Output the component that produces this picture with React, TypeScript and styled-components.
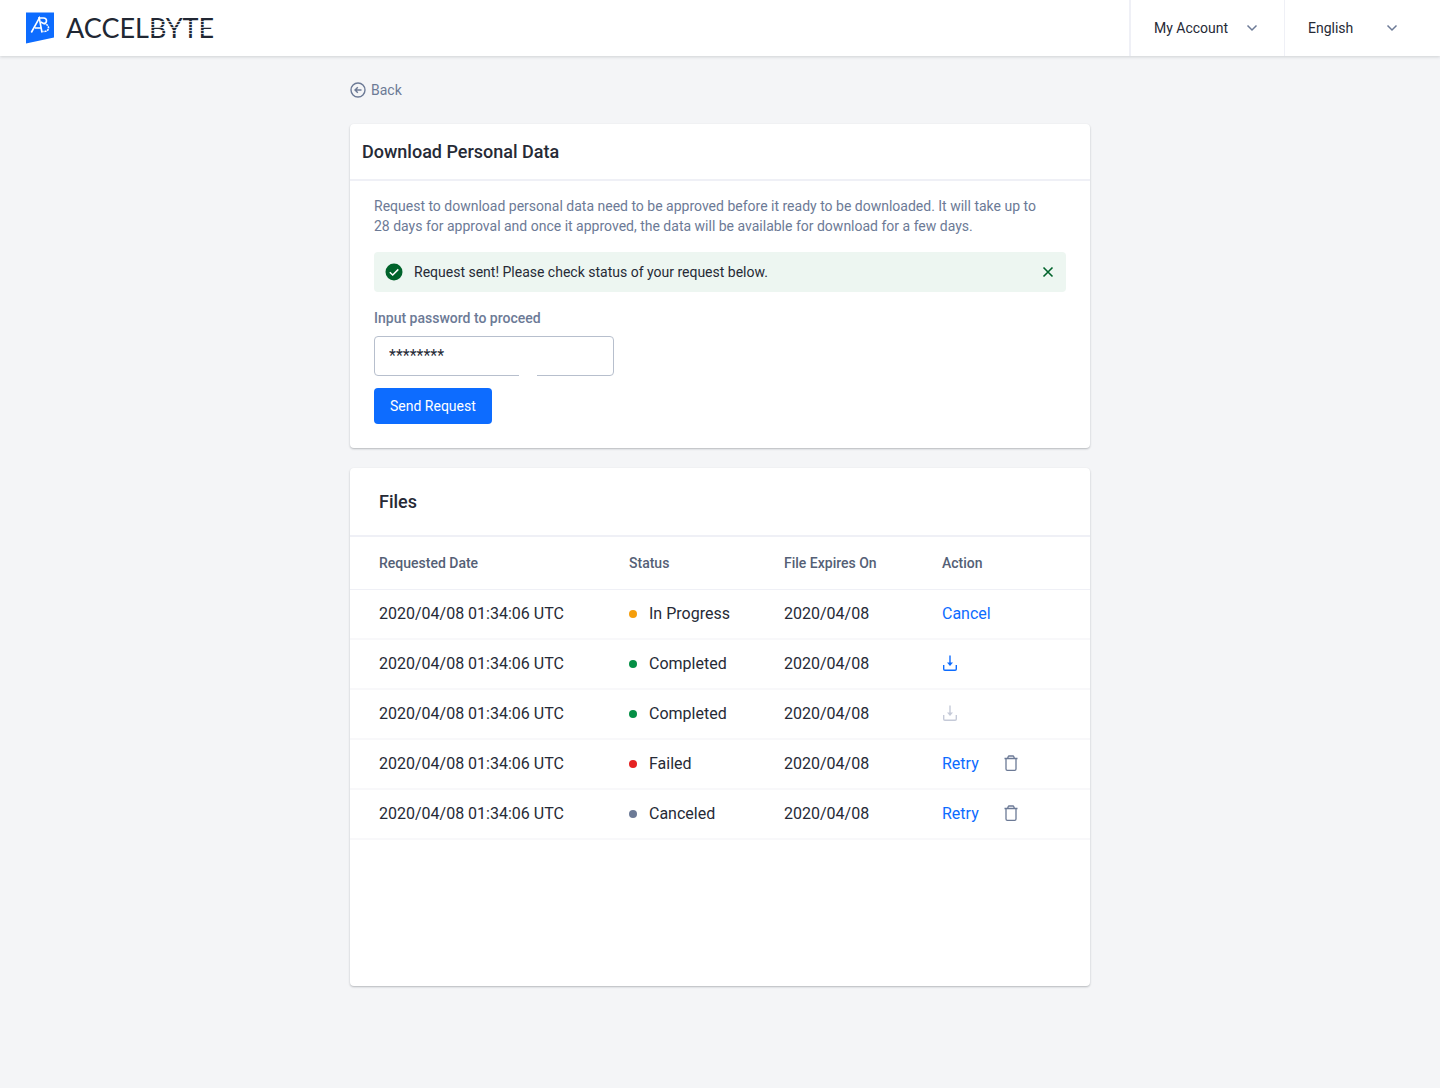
import React, { useState } from "react";
import styled, { createGlobalStyle, css } from "styled-components";

const color = {
  page: "#f4f5f7",
  ink: "#262a36",
  muted: "#6c7a96",
  heading: "#555f76",
  line: "#eff0f6",
  faint: "#f8f8fa",
  border: "#b7bfcd",
  blue: "#0d6cff",
  green: "#00632b",
  greenTint: "#edf6f1",
};

const GlobalStyle = createGlobalStyle`
  *, *::before, *::after { box-sizing: border-box; }
  body {
    margin: 0;
    min-height: 100vh;
    background: ${color.page};
    color: ${color.ink};
    font-family: Roboto, "Liberation Sans", sans-serif;
    font-size: 14px;
    line-height: 20px;
  }
  button, input { font: inherit; color: inherit; }
`;

const Header = styled.header`
  display: flex;
  justify-content: space-between;
  height: 56px;
  background: #fff;
  box-shadow: 0 1px 3px rgba(38, 42, 54, 0.18);
`;

const Brand = styled.a`
  display: flex;
  align-items: center;
  gap: 12px;
  padding-left: 26px;
  color: #212733;
  text-decoration: none;
`;

const Wordmark = styled.span`
  font-family: Lato, "Liberation Sans", sans-serif;
  font-size: 27px;
  line-height: 32px;
`;

const Striped = styled.span`
  position: relative;
  display: inline-block;

  &::after {
    content: "";
    position: absolute;
    inset: 9px 0;
    background: repeating-linear-gradient(rgba(255, 255, 255, 0.75) 0 1px, transparent 1px 3px);
  }
`;

const HeaderMenus = styled.nav`
  display: flex;
`;

const MenuButton = styled.button<{ $wide?: boolean }>`
  display: flex;
  align-items: center;
  justify-content: space-between;
  width: ${(p) => (p.$wide ? 156 : 155)}px;
  padding: 0 ${(p) => (p.$wide ? 42 : 26)}px 0 23px;
  border: 0;
  border-left: ${(p) => (p.$wide ? 1 : 2)}px solid ${color.line};
  background: none;
  cursor: pointer;
`;

const Main = styled.main`
  display: flex;
  flex-direction: column;
  width: 100%;
  max-width: 740px;
  margin: 0 auto;
  padding: 24px 0 80px;
`;

const BackLink = styled.a`
  display: inline-flex;
  align-items: center;
  align-self: flex-start;
  gap: 5px;
  margin-bottom: 24px;
  color: ${color.muted};
  text-decoration: none;
`;

const Card = styled.section<{ $tall?: boolean }>`
  margin-bottom: 20px;
  border-radius: 4px;
  background: #fff;
  box-shadow: 0 1px 2px rgba(38, 42, 54, 0.3);
  ${(p) => p.$tall && css`min-height: 518px;`}
`;

const CardTitle = styled.h2<{ $roomy?: boolean }>`
  margin: 0;
  padding: ${(p) => (p.$roomy ? "22px 29px 21px" : "16px 12px 15px")};
  border-bottom: 2px solid ${color.line};
  font-size: 18px;
  font-weight: 500;
  line-height: 24px;
`;

const CardBody = styled.div`
  padding: 15px 24px 24px;
`;

const Intro = styled.p`
  max-width: 680px;
  margin: 0 0 16px;
  color: ${color.muted};
`;

const Alert = styled.div`
  display: flex;
  align-items: center;
  gap: 10px;
  height: 40px;
  margin-bottom: 16px;
  padding: 0 10px;
  border-radius: 4px;
  background: ${color.greenTint};
`;

const AlertText = styled.span`
  flex: 1;
`;

const IconButton = styled.button<{ $tone?: string }>`
  display: inline-flex;
  padding: 0;
  border: 0;
  background: none;
  color: ${(p) => p.$tone ?? color.muted};
  cursor: pointer;

  &:disabled { cursor: default; }
`;

const Form = styled.form`
  display: flex;
  flex-direction: column;
  align-items: flex-start;
`;

const Label = styled.label`
  margin-bottom: 8px;
  color: ${color.muted};
  font-weight: 500;
`;

const PasswordField = styled.div`
  position: relative;
  display: flex;
  width: 240px;
  margin-bottom: 12px;

  &::after {
    content: "";
    position: absolute;
    right: 77px;
    bottom: 0;
    width: 18px;
    height: 1px;
    background: #fff;
  }
`;

const PasswordBox = styled.input`
  width: 100%;
  height: 40px;
  padding: 0 14px 2px;
  border: 1px solid ${color.border};
  border-radius: 4px;
  background: #fff;
  font-size: 16px;
`;

const PrimaryButton = styled.button`
  height: 36px;
  padding: 0 16px;
  border: 0;
  border-radius: 4px;
  background: ${color.blue};
  color: #fff;
  cursor: pointer;
`;

const Table = styled.table`
  width: 100%;
  border-collapse: collapse;
  table-layout: fixed;
`;

const Col = styled.col<{ $share?: number }>`
  width: ${(p) => (p.$share ? `${p.$share}px` : "auto")};
`;

const HeadCell = styled.th`
  height: 52px;
  padding: 0;
  border-bottom: 1px solid ${color.line};
  color: ${color.heading};
  font-weight: 500;
  text-align: left;

  &:first-child { padding-left: 29px; }
`;

const Cell = styled.td`
  height: 50px;
  padding: 0;
  border-bottom: 2px solid ${color.faint};
  font-size: 16px;

  &:first-child { padding-left: 29px; }
`;

const Status = styled.span<{ $dot: string }>`
  display: flex;
  align-items: center;
  gap: 12px;

  &::before {
    content: "";
    width: 8px;
    height: 8px;
    border-radius: 50%;
    background: ${(p) => p.$dot};
  }
`;

const Actions = styled.div`
  display: flex;
  align-items: center;
  gap: 24px;
`;

const TextButton = styled.button`
  padding: 0;
  border: 0;
  background: none;
  color: ${color.blue};
  cursor: pointer;
`;

const LogoMark = () => (
  <svg width="28" height="32" viewBox="0 0 28 32" aria-hidden="true">
    <path d="M0 0.5H28V25.5L0 31.5Z" fill={color.blue} />
    <g fill="none" stroke="#fff" strokeWidth="1.6">
      <path d="M5.3 20.5L13.3 6L16 20.500M9 16H15" />
      <path d="M12 6H17.500C21.500 6 21.500 11.500 17.500 11.500L14.800 10" />
      <path d="M17.500 11.500C24 12 24 19.500 18.500 19.500H16.500" strokeDasharray="2 0.8" />
    </g>
  </svg>
);

const Chevron = () => (
  <svg width="12" height="8" viewBox="0 0 12 8" fill="none" stroke={color.muted} strokeWidth="1.5" aria-hidden="true">
    <path d="M1.500 1.500L6 6L10.500 1.500" />
  </svg>
);

const BackIcon = () => (
  <svg width="16" height="16" viewBox="0 0 16 16" fill="none" stroke="currentColor" strokeWidth="1.4" aria-hidden="true">
    <circle cx="8" cy="8" r="7" />
    <path d="M11.500 8H5M7.800 5.200L5 8L7.800 10.800" />
  </svg>
);

const CheckIcon = () => (
  <svg width="20" height="20" viewBox="0 0 20 20" aria-hidden="true">
    <circle cx="10" cy="10" r="8.5" fill={color.green} />
    <path d="M5.800 10.200L8.700 13L14.300 7.400" fill="none" stroke="#fff" strokeWidth="1.5" />
  </svg>
);

const CloseIcon = () => (
  <svg width="16" height="16" viewBox="0 0 16 16" fill="none" stroke={color.green} strokeWidth="1.6" aria-hidden="true">
    <path d="M3.500 3.500L12.500 12.500M12.500 3.500L3.500 12.500" />
  </svg>
);

const DownloadIcon = () => (
  <svg width="16" height="18" viewBox="0 0 16 18" fill="none" stroke="currentColor" strokeWidth="1.4" aria-hidden="true">
    <path d="M8 0.500V10" />
    <path d="M5 7.500H11L8 11Z" fill="currentColor" stroke="none" />
    <path d="M1.700 10V14Q1.700 15.200 2.900 15.200H13.100Q14.300 15.200 14.300 14V10" />
  </svg>
);

const TrashIcon = () => (
  <svg width="16" height="18" viewBox="0 0 16 18" fill="none" stroke="currentColor" strokeWidth="1.3" aria-hidden="true">
    <path d="M1.500 3.500H14.500M4.500 3.500L5.300 1.500Q5.500 1 6 1H10Q10.500 1 10.700 1.500L11.500 3.500" />
    <path d="M3 3.500V14Q3 15.300 4.300 15.300H11.700Q13 15.300 13 14V3.500" />
  </svg>
);

type FileRow = {
  id: number;
  status: string;
  dot: string;
  action: "cancel" | "download" | "expired" | "retry";
};

const files: FileRow[] = [
  { id: 1, status: "In Progress", dot: "#f59e0b", action: "cancel" },
  { id: 2, status: "Completed", dot: "#048f45", action: "download" },
  { id: 3, status: "Completed", dot: "#048f45", action: "expired" },
  { id: 4, status: "Failed", dot: "#e52222", action: "retry" },
  { id: 5, status: "Canceled", dot: "#6c7a96", action: "retry" },
];

function RowActions({ action }: { action: FileRow["action"] }) {
  if (action === "cancel") return <TextButton type="button">Cancel</TextButton>;
  if (action === "retry") {
    return (
      <Actions>
        <TextButton type="button">Retry</TextButton>
        <IconButton type="button" aria-label="Delete"><TrashIcon /></IconButton>
      </Actions>
    );
  }
  const expired = action === "expired";
  return (
    <Actions>
      <IconButton type="button" aria-label="Download" disabled={expired} $tone={expired ? "#c5cad8" : color.blue}>
        <DownloadIcon />
      </IconButton>
    </Actions>
  );
}

export default function App() {
  const [password, setPassword] = useState("********");
  const [showAlert, setShowAlert] = useState(true);

  return (
    <>
      <GlobalStyle />
      <Header>
        <Brand href="#">
          <LogoMark />
          <Wordmark>ACCEL<Striped>BYTE</Striped></Wordmark>
        </Brand>
        <HeaderMenus>
          <MenuButton type="button">My Account<Chevron /></MenuButton>
          <MenuButton type="button" $wide>English<Chevron /></MenuButton>
        </HeaderMenus>
      </Header>
      <Main>
        <BackLink href="#"><BackIcon />Back</BackLink>
        <Card>
          <CardTitle>Download Personal Data</CardTitle>
          <CardBody>
            <Intro>
              Request to download personal data need to be approved before it ready to be downloaded. It will take up to
              28 days for approval and once it approved, the data will be available for download for a few days.
            </Intro>
            {showAlert && (
              <Alert role="status">
                <CheckIcon />
                <AlertText>Request sent! Please check status of your request below.</AlertText>
                <IconButton type="button" aria-label="Dismiss" onClick={() => setShowAlert(false)}><CloseIcon /></IconButton>
              </Alert>
            )}
            <Form onSubmit={(e) => e.preventDefault()}>
              <Label htmlFor="password">Input password to proceed</Label>
              <PasswordField>
                <PasswordBox id="password" value={password} onChange={(e) => setPassword(e.target.value)} />
              </PasswordField>
              <PrimaryButton type="submit">Send Request</PrimaryButton>
            </Form>
          </CardBody>
        </Card>
        <Card $tall>
          <CardTitle $roomy>Files</CardTitle>
          <Table>
            <colgroup>
              <Col $share={279} />
              <Col $share={155} />
              <Col $share={158} />
              <Col />
            </colgroup>
            <thead>
              <tr>
                <HeadCell scope="col">Requested Date</HeadCell>
                <HeadCell scope="col">Status</HeadCell>
                <HeadCell scope="col">File Expires On</HeadCell>
                <HeadCell scope="col">Action</HeadCell>
              </tr>
            </thead>
            <tbody>
              {files.map((file) => (
                <tr key={file.id}>
                  <Cell>2020/04/08 01:34:06 UTC</Cell>
                  <Cell><Status $dot={file.dot}>{file.status}</Status></Cell>
                  <Cell>2020/04/08</Cell>
                  <Cell><RowActions action={file.action} /></Cell>
                </tr>
              ))}
            </tbody>
          </Table>
        </Card>
      </Main>
    </>
  );
}
